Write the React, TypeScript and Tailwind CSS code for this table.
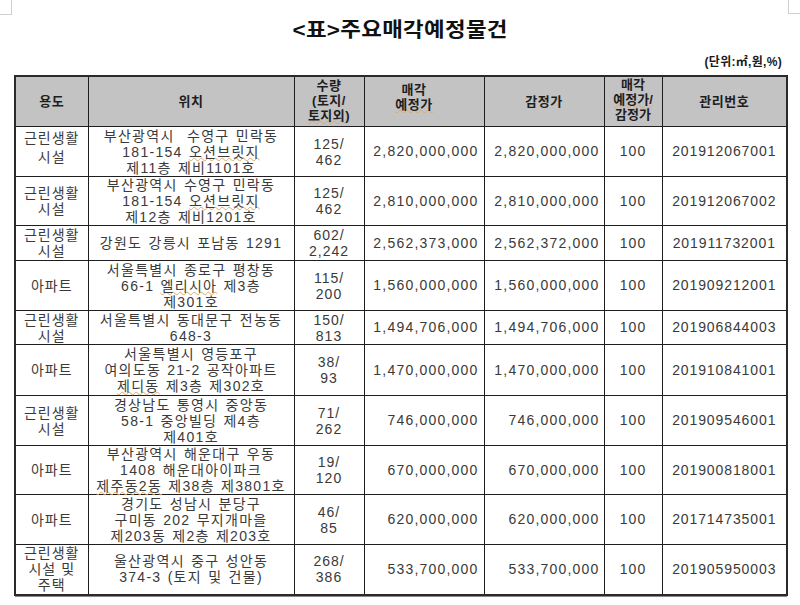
const KR = "font-['Liberation_Sans','Noto_Sans_CJK_KR',sans-serif]"

type Row = {
  use: string[]
  useLeading?: string
  place: string[]
  qty: string[]
  price: string
  appraisal: string
  ratio: string
  id: string
  h: string
}

const rows: Row[] = [
  {
    use: ["근린생활", "시설"],
    useLeading: "leading-[19px] pb-[8px]",
    place: ["부산광역시\u00a0\u00a0수영구 민락동", "181-154 ~오션브릿지~", "제11층 제비1101호"],
    qty: ["125/", "462"],
    price: "2,820,000,000",
    appraisal: "2,820,000,000",
    ratio: "100",
    id: "201912067001",
    h: "h-[50px]",
  },
  {
    use: ["근린생활", "시설"],
    place: ["부산광역시 수영구 민락동", "181-154 ~오션브릿지~", "제12층 제비1201호"],
    qty: ["125/", "462"],
    price: "2,810,000,000",
    appraisal: "2,810,000,000",
    ratio: "100",
    id: "201912067002",
    h: "h-[49px]",
  },
  {
    use: ["근린생활", "시설"],
    place: ["강원도 강릉시 포남동 1291"],
    qty: ["602/", "2,242"],
    price: "2,562,373,000",
    appraisal: "2,562,372,000",
    ratio: "100",
    id: "201911732001",
    h: "h-[35px]",
  },
  {
    use: ["아파트"],
    place: ["서울특별시 종로구 평창동", "66-1 ~엘리시아~ 제3층", "제301호"],
    qty: ["115/", "200"],
    price: "1,560,000,000",
    appraisal: "1,560,000,000",
    ratio: "100",
    id: "201909212001",
    h: "h-[50px]",
  },
  {
    use: ["근린생활", "시설"],
    place: ["서울특별시 동대문구 전농동", "648-3"],
    qty: ["150/", "813"],
    price: "1,494,706,000",
    appraisal: "1,494,706,000",
    ratio: "100",
    id: "201906844003",
    h: "h-[34px]",
  },
  {
    use: ["아파트"],
    place: ["서울특별시 영등포구", "여의도동 21-2 공작아파트", "~제디동~ 제3층 제302호"],
    qty: ["38/", "93"],
    price: "1,470,000,000",
    appraisal: "1,470,000,000",
    ratio: "100",
    id: "201910841001",
    h: "h-[51px]",
  },
  {
    use: ["근린생활", "시설"],
    place: ["경상남도 통영시 중앙동", "58-1 중앙빌딩 제4층", "제401호"],
    qty: ["71/", "262"],
    price: "746,000,000",
    appraisal: "746,000,000",
    ratio: "100",
    id: "201909546001",
    h: "h-[50px]",
  },
  {
    use: ["아파트"],
    place: ["부산광역시 해운대구 우동", "1408 해운대아이파크", "~제주동2동~ 제38층 제3801호"],
    qty: ["19/", "120"],
    price: "670,000,000",
    appraisal: "670,000,000",
    ratio: "100",
    id: "201900818001",
    h: "h-[49px]",
  },
  {
    use: ["아파트"],
    place: ["경기도 성남시 분당구", "구미동 202 무지개마을", "제203동 제2층 제203호"],
    qty: ["46/", "85"],
    price: "620,000,000",
    appraisal: "620,000,000",
    ratio: "100",
    id: "201714735001",
    h: "h-[50px]",
  },
  {
    use: ["근린생활", "시설 및", "주택"],
    place: ["울산광역시 중구 성안동", "374-3 (토지 및 건물)"],
    qty: ["268/", "386"],
    price: "533,700,000",
    appraisal: "533,700,000",
    ratio: "100",
    id: "201905950003",
    h: "h-[50px]",
  },
]

// "~word~" gets the spell-check squiggle seen in the reference
const Marked = ({ text }: { text: string }) => (
  <>
    {text.split("~").map((part, i) =>
      i % 2 === 1 ? (
        <span
          key={i}
          className="underline decoration-wavy decoration-[#dba86c] decoration-1 underline-offset-[0px]"
        >
          {part}
        </span>
      ) : (
        <span key={i}>{part}</span>
      )
    )}
  </>
)

const Lines = ({ lines, className }: { lines: string[]; className: string }) => (
  <div className={className}>
    {lines.map((l, i) => (
      <div key={i} className="whitespace-nowrap">
        <Marked text={l} />
      </div>
    ))}
  </div>
)

const cell = "border border-[#1e1e1e] p-0 align-middle"
const head = `${cell} bg-[#c3c3c3] text-[13px] font-bold text-[#1e1e1e] tracking-[0.5px]`

const App = () => {
  return (
    <div className={`w-[800px] h-[605px] bg-white overflow-hidden ${KR}`}>
      <div className="flex justify-between h-[15px]">
        <div className="w-[12px] h-[15px] border-r border-b border-[#cfcfcf]" />
        <div className="w-[12px] h-[14px] border-l border-b border-[#cfcfcf]" />
      </div>

      <div className="flex justify-center h-[30px] items-center">
        <h1 className="text-[20px] leading-[28px] font-bold text-[#111] scale-x-[1.12] tracking-[0.3px]">
          &lt;표&gt;주요매각예정물건
        </h1>
      </div>

      <div className="flex justify-end pr-[18px] mt-[9px] h-[16px]">
        <span className="text-[12px] leading-[16px] font-bold text-[#1a1a1a] tracking-[0.3px]">
          (단위:㎡,원,%)
        </span>
      </div>

      <div className="ml-[14px] mt-[5px] w-[772px] shadow-[1px_1px_0_#8a8a8a]">
        <table className="w-[772px] table-fixed border-collapse border-2 border-[#2a2a2a] text-[#3a3a3a]">
          <colgroup>
            <col className="w-[73px]" />
            <col className="w-[206px]" />
            <col className="w-[70px]" />
            <col className="w-[120px]" />
            <col className="w-[120px]" />
            <col className="w-[58px]" />
            <col className="w-[125px]" />
          </colgroup>
          <thead>
            <tr className="h-[50px]">
              <th className={head}>용도</th>
              <th className={head}>위치</th>
              <th className={head}>
                <Lines lines={["수량", "(토지/", "~토지외~)"]} className="leading-[15px] pb-[3px]" />
              </th>
              <th className={head}>
                <Lines lines={["매각", "~예정가~"]} className="leading-[15px] pb-[10px] pr-[20px]" />
              </th>
              <th className={head}>감정가</th>
              <th className={head}>
                <Lines lines={["매각", "~예정가/~", "감정가"]} className="leading-[15px] pb-[4px] tracking-[0px]" />
              </th>
              <th className={head}>관리번호</th>
            </tr>
          </thead>
          <tbody>
            {rows.map((r) => (
              <tr key={r.id} className={r.h}>
                <td className={`${cell} text-center`}>
                  <Lines
                    lines={r.use}
                    className={`text-[14px] tracking-[1px] ${r.useLeading ?? "leading-[16px]"}`}
                  />
                </td>
                <td className={`${cell} text-center`}>
                  <Lines
                    lines={r.place}
                    className="text-[14px] leading-[16px] tracking-[1.3px] [word-spacing:1px]"
                  />
                </td>
                <td className={`${cell} text-center`}>
                  <Lines lines={r.qty} className="text-[14px] leading-[16px] tracking-[1px]" />
                </td>
                <td className={`${cell} text-right pr-[5px] text-[14px] tracking-[1.2px]`}>
                  {r.price}
                </td>
                <td className={`${cell} text-right pr-[4px] text-[14px] tracking-[1.2px]`}>
                  {r.appraisal}
                </td>
                <td className={`${cell} text-center text-[14px] tracking-[1px]`}>{r.ratio}</td>
                <td className={`${cell} text-center text-[14px] tracking-[0.9px]`}>{r.id}</td>
              </tr>
            ))}
          </tbody>
        </table>
      </div>
    </div>
  )
}

export default App
